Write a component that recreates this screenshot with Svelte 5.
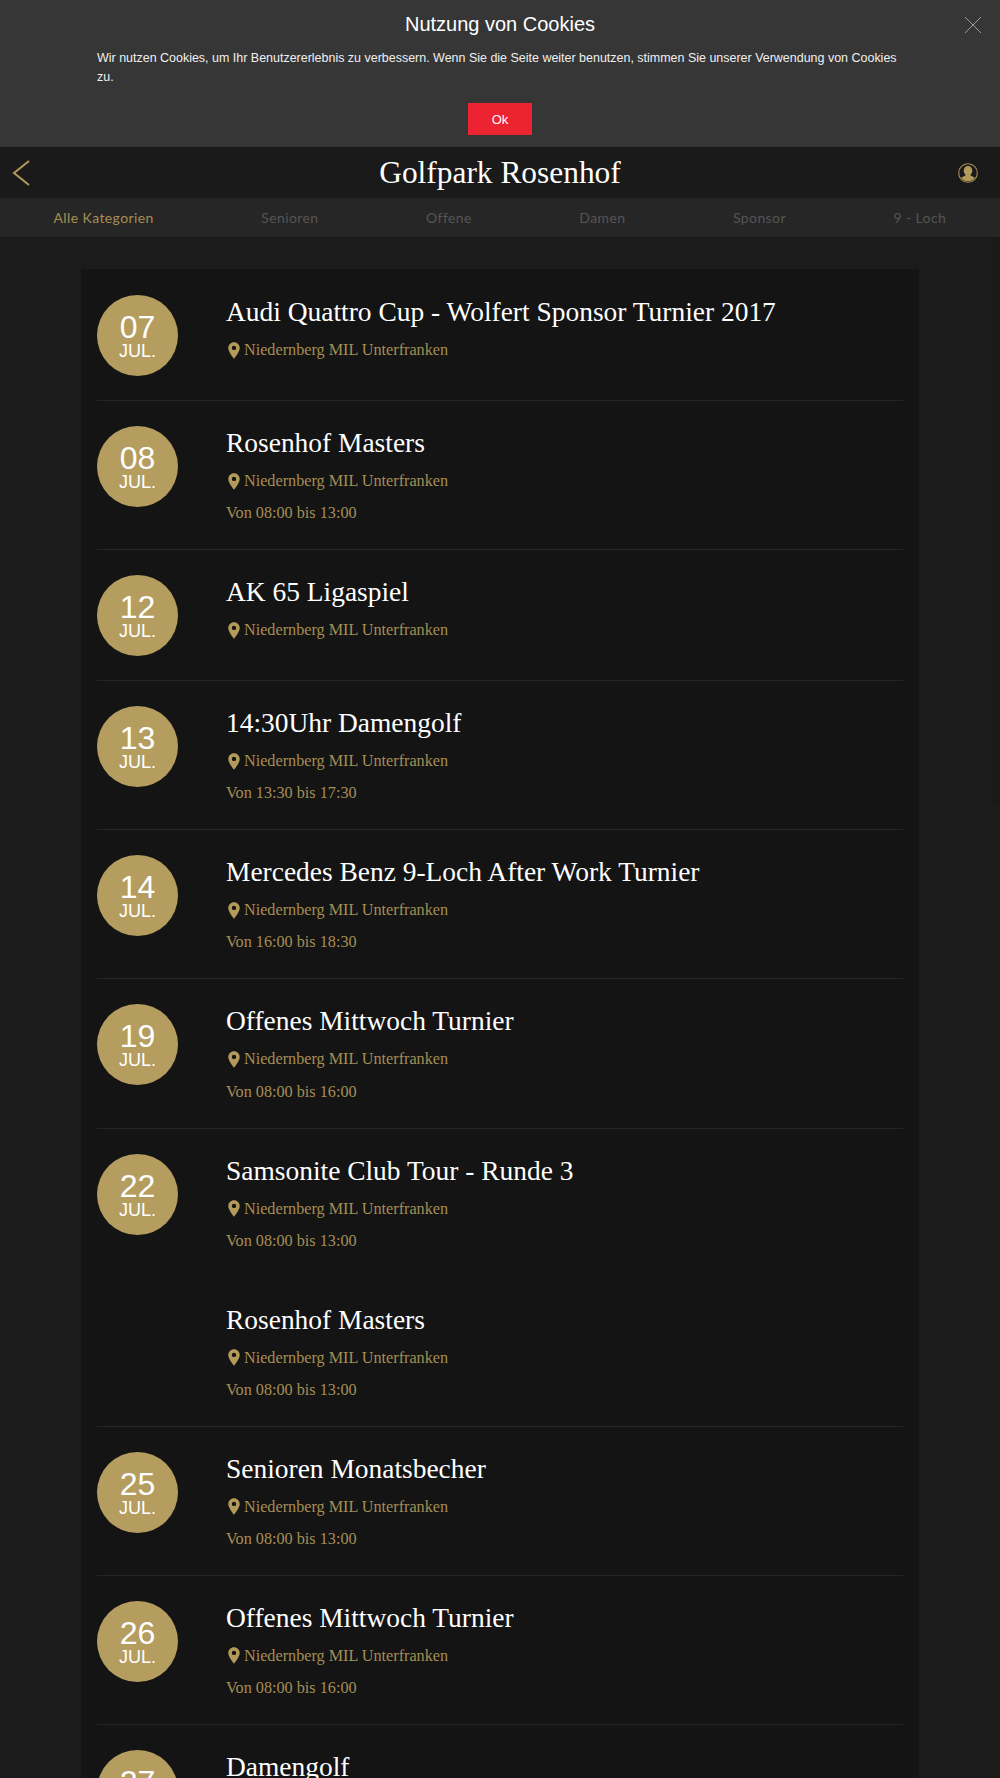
<script>
  const L = 'Niedernberg MIL Unterfranken';
  const groups = [
    { d: '07', ev: [{ t: 'Audi Quattro Cup - Wolfert Sponsor Turnier 2017' }] },
    { d: '08', ev: [{ t: 'Rosenhof Masters', h: 'Von 08:00 bis 13:00' }] },
    { d: '12', ev: [{ t: 'AK 65 Ligaspiel' }] },
    { d: '13', ev: [{ t: '14:30Uhr Damengolf', h: 'Von 13:30 bis 17:30' }] },
    { d: '14', ev: [{ t: 'Mercedes Benz 9-Loch After Work Turnier', h: 'Von 16:00 bis 18:30' }] },
    { d: '19', ev: [{ t: 'Offenes Mittwoch Turnier', h: 'Von 08:00 bis 16:00' }] },
    { d: '22', ev: [{ t: 'Samsonite Club Tour - Runde 3', h: 'Von 08:00 bis 13:00' }, { t: 'Rosenhof Masters', h: 'Von 08:00 bis 13:00' }] },
    { d: '25', ev: [{ t: 'Senioren Monatsbecher', h: 'Von 08:00 bis 13:00' }] },
    { d: '26', ev: [{ t: 'Offenes Mittwoch Turnier', h: 'Von 08:00 bis 16:00' }] },
    { d: '27', ev: [{ t: 'Damengolf' }] }
  ];
  const tabs = ['Alle Kategorien', 'Senioren', 'Offene', 'Damen', 'Sponsor', '9 - Loch'];
</script>

<div class="page">
  <section class="cookie">
    <h2>Nutzung von Cookies</h2>
    <button class="close" aria-label="Schließen">
      <svg width="18" height="18" viewBox="0 0 18 18"><path d="M1 1L17 17M17 1L1 17" stroke="#9a9a9a" stroke-width="1" fill="none"/></svg>
    </button>
    <p>Wir nutzen Cookies, um Ihr Benutzererlebnis zu verbessern. Wenn Sie die Seite weiter benutzen, stimmen Sie unserer Verwendung von Cookies zu.</p>
    <button class="ok">Ok</button>
  </section>

  <header class="bar">
    <svg class="back" width="18" height="26" viewBox="0 0 18 26"><path d="M17 1L2 13L17 25" stroke="#b39a5b" stroke-width="2" fill="none"/></svg>
    <h1>Golfpark Rosenhof</h1>
    <svg class="user" width="20" height="20" viewBox="0 0 20 20">
      <circle cx="10" cy="10" r="9.300" fill="none" stroke="#a58e54" stroke-width="1.100"/>
      <path d="M10 3c2.600 0 4.300 2 4.300 4.600 0 1.800-.8 3.200-1.700 4-.2.8.1 1.200 1 1.500 1.400.5 2.400 1 3 1.900A8 8 0 0 1 10 18.300a8 8 0 0 1-6.600-3.300c.6-.9 1.600-1.400 3-1.900.9-.3 1.200-.7 1-1.500-.9-.8-1.700-2.200-1.700-4C5.700 5 7.400 3 10 3z" fill="#b39a5b"/>
    </svg>
  </header>

  <nav class="tabs">
    {#each tabs as label, i}
      <span class:active={i === 0}>{label}</span>
    {/each}
  </nav>

  <main class="content">
    <div class="scroll"></div>
    <div class="card">
      {#each groups as g}
        <article class="group">
          <div class="date"><b>{g.d}</b><span>JUL.</span></div>
          <div class="events">
            {#each g.ev as e}
              <div class="event">
                <h3>{e.t}</h3>
                <div class="loc">
                  <svg width="12" height="17" viewBox="0 0 12 17"><path fill-rule="evenodd" d="M6 .3C9.200.3 11.700 2.800 11.700 6c0 3.600-3.800 8.300-5.700 10.700C4.100 14.300.3 9.600.3 6 .3 2.800 2.800.3 6 .3zM6 3.700a2.200 2.200 0 1 0 0 4.400 2.200 2.200 0 0 0 0-4.400z" fill="#b39a5b"/></svg>
                  <span>{L}</span>
                </div>
                {#if e.h}<div class="time">{e.h}</div>{/if}
              </div>
            {/each}
          </div>
        </article>
      {/each}
    </div>
  </main>
</div>

<style>
  :global(body) { margin: 0; background: #1b1b1b; }
  .page { width: 1000px; height: 1778px; overflow: hidden; font-family: "Liberation Serif", serif; }
  h1, h2, h3, p { margin: 0; font-weight: 400; }

  .cookie { position: relative; height: 147px; box-sizing: border-box; background: #363636; padding: 12px 97px 0; color: #fff; font-family: "Liberation Sans", sans-serif; }
  .cookie h2 { font-size: 20px; line-height: 24px; text-align: center; }
  .cookie p { margin-top: 13px; font-size: 12.480px; line-height: 19px; color: #f0f0f0; }
  .close { position: absolute; right: 18px; top: 16px; padding: 0; border: 0; background: none; line-height: 0; }
  .ok { display: block; width: 64px; height: 32px; margin: 16px auto 0; padding: 0; border: 0; background: #ec2330; color: #fff; font: 13px "Liberation Sans", sans-serif; }

  .bar { position: relative; height: 51px; background: #1a1a1a; display: flex; align-items: center; justify-content: center; }
  .bar h1 { font-size: 31.400px; color: #fff; line-height: 51px; }
  .back { position: absolute; left: 12px; top: 13px; }
  .user { position: absolute; left: 958px; top: 16px; }

  .tabs { height: 39px; background: #262626; display: flex; gap: 107.500px; padding-left: 53.500px; }
  .tabs span { font: 14px/39px Lato, sans-serif; letter-spacing: .4px; color: #555; white-space: nowrap; }
  .tabs span.active { color: #a58e54; }

  .content { position: relative; padding-top: 32px; }
  .scroll { position: absolute; right: 0; top: 0; width: 7px; height: 566px; background: #191919; }
  .card { width: 838px; margin: 0 auto; padding: 1px 16px 0; box-sizing: border-box; background: #141414; }

  .group { display: flex; border-bottom: 1px solid #262626; padding-top: 25px; }
  .group:last-child { border-bottom: 0; }
  .date { flex: none; width: 81px; height: 81px; border-radius: 50%; background: #b49d5e; color: #fff; font-family: "Liberation Sans", sans-serif; text-align: center; margin-right: 48px; }
  .date b { display: block; font-weight: 400; font-size: 32px; line-height: 30px; padding-top: 17px; }
  .date span { display: block; font-size: 18px; line-height: 18px; }

  .events { flex: 1; }
  .event { padding-bottom: 22px; min-height: 83px; }
  .event + .event { margin-top: 26px; }
  .event h3 { font-size: 27.450px; line-height: 34px; color: #fff; }
  .loc { display: flex; align-items: center; gap: 4px; margin-top: 7px; font-size: 16.200px; line-height: 28px; color: #a58e54; padding-left: 2px; }
  .time { margin-top: 4.150px; font-size: 16.200px; line-height: 28px; color: #a58e54; }
</style>
